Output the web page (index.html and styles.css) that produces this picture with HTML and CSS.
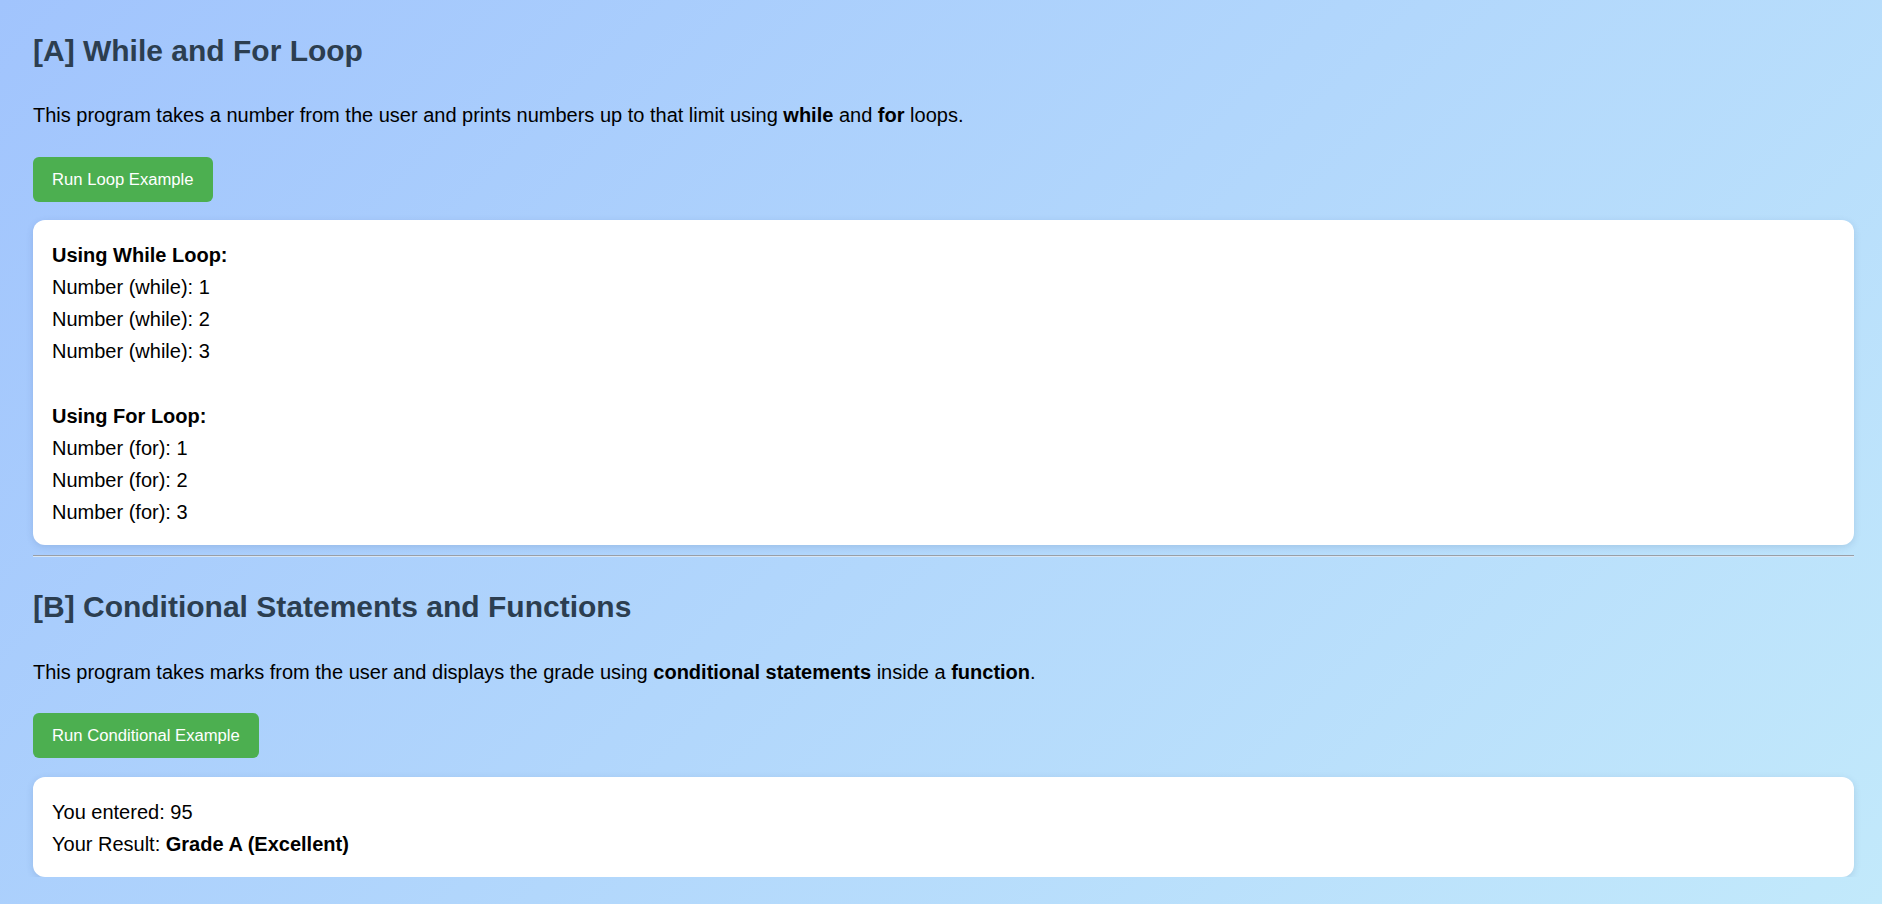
FILE: index.html
```html
<!DOCTYPE html>
<html lang="en">
<head>
<meta charset="utf-8">
<title>While and For Loop / Conditional Statements</title>
<link rel="stylesheet" href="styles.css">
</head>
<body>
  <section class="section">
    <h2 class="title">[A] While and For Loop</h2>
    <p class="desc">This program takes a number from the user and prints numbers up to that limit using <b>while</b> and <b>for</b> loops.</p>
    <button class="run-btn" type="button">Run Loop Example</button>
    <div class="output">
      <div class="group">
        <b>Using While Loop:</b><br>
        Number (while): 1<br>
        Number (while): 2<br>
        Number (while): 3
      </div>
      <div class="group group-next">
        <b>Using For Loop:</b><br>
        Number (for): 1<br>
        Number (for): 2<br>
        Number (for): 3
      </div>
    </div>
  </section>
  <hr class="divider">
  <section class="section section-b">
    <h2 class="title">[B] Conditional Statements and Functions</h2>
    <p class="desc">This program takes marks from the user and displays the grade using <b>conditional statements</b> inside a <b>function</b>.</p>
    <button class="run-btn" type="button">Run Conditional Example</button>
    <div class="output">
      You entered: 95<br>
      Your Result: <b>Grade A (Excellent)</b>
    </div>
  </section>
</body>
</html>
```

FILE: styles.css
```css
html {
  min-height: 100%;
  background: linear-gradient(135deg, #a1c4fd 0%, #c2e9fb 100%);
}

body {
  margin: 0;
  padding: 3px 28px 0 33px;
  font-family: "Liberation Sans", Arial, sans-serif;
  font-size: 20px;
  line-height: 32px;
  color: #000;
}

.title {
  font-size: 30px;
  line-height: 48px;
  font-weight: bold;
  color: #2c3e50;
  margin: 24px 0 24px;
}

.section-b .title {
  margin-top: 26px;
  margin-bottom: 25px;
}

.desc {
  margin: 0 0 26px;
}

.section-b .desc {
  margin-bottom: 25px;
}

.run-btn {
  display: block;
  font-family: "Liberation Sans", Arial, sans-serif;
  font-size: 16.65px;
  line-height: 19px;
  padding: 13px 19px;
  background: #4caf50;
  color: #fff;
  border: 0;
  border-radius: 6px;
  margin: 0 0 18px;
  cursor: pointer;
}

.section-b .run-btn {
  margin-bottom: 19px;
}

.output {
  background: #fff;
  border-radius: 12px;
  padding: 19px 19px 17px;
  box-shadow: 0 2px 7px rgba(40, 70, 120, 0.15);
}

.group-next {
  margin-top: 33px;
}

.divider {
  margin: 10px 0 0;
  border: 0;
  border-top: 1px solid #9a9fa6;
  border-bottom: 1px solid #d8e6f5;
  height: 0;
}
```
